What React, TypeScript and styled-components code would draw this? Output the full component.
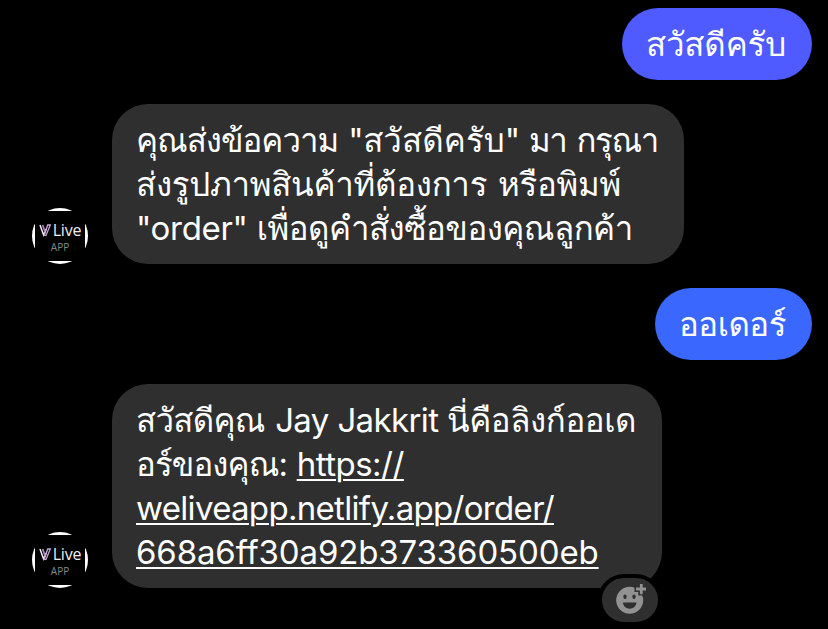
import React from "react";
import styled, { createGlobalStyle } from "styled-components";

const GlobalStyle = createGlobalStyle`
  * { box-sizing: border-box; }
  body { margin: 0; background: #000; overflow: hidden; }
`;

const Thread = styled.main`
  width: 828px;
  height: 629px;
  padding: 8px 16px 0 32px;
  display: flex;
  flex-direction: column;
  gap: 24px;
  background: #000;
  overflow: hidden;
  color: #fff;
  font: 400 33px/44px Inter, Loma, sans-serif;
`;

const Row = styled.div<{ $sent?: boolean }>`
  display: flex;
  flex: none;
  align-items: flex-end;
  justify-content: ${(p) => (p.$sent ? "flex-end" : "flex-start")};
  gap: 24px;
`;

const Bubble = styled.div<{ $color: string; $width: number }>`
  position: relative;
  width: ${(p) => p.$width}px;
  padding: 14px 24px;
  border-radius: 36px;
  background: ${(p) => p.$color};
`;

const Line = styled.div`
  height: 44px;
  white-space: pre;
`;

const Thai = styled.span<{ $track?: number }>`
  font-family: Loma, sans-serif;
  letter-spacing: ${(p) => p.$track ?? 0}px;
`;

const Latin = styled.span<{ $track?: number }>`
  letter-spacing: ${(p) => p.$track ?? 0}px;
`;

const Link = styled.a<{ $track?: number }>`
  color: inherit;
  letter-spacing: ${(p) => p.$track ?? 0}px;
  text-decoration: underline;
  text-decoration-thickness: 2px;
  text-underline-offset: 3px;
`;

const Avatar = styled.div`
  width: 56px;
  height: 56px;
  flex: none;
  border-radius: 50%;
  background: linear-gradient(#000, #000) center / 50px 50px no-repeat, #fff;
  padding-top: 13px;
  display: flex;
  flex-direction: column;
  align-items: center;
`;

const Brand = styled.div`
  display: flex;
  align-items: center;
  height: 18px;
  gap: 1px;
  font: 400 16px/18px "Open Sans", sans-serif;
  letter-spacing: -0.2px;
  color: #eee;
`;

const BrandSub = styled.div`
  margin-top: 1px;
  font: 400 10px/14px "Open Sans", sans-serif;
  color: #888;
`;

const Reaction = styled.button`
  position: absolute;
  right: 0;
  bottom: -38px;
  width: 64px;
  height: 52px;
  padding: 0;
  border: 4px solid #000;
  border-radius: 26px;
  background: #2f2f2f;
  display: flex;
  align-items: center;
  justify-content: center;
`;

const LiveAvatar = () => (
  <Avatar>
    <Brand>
      <svg width="13" height="14" viewBox="0 0 13 14" fill="none">
        <path d="M1 2 4.600 12 7.200 6" stroke="#eee" strokeWidth="1.5" />
        <path d="M3.600 2 6 8.500" stroke="#a77dbb" strokeWidth="1.800" />
        <path d="M5.200 12.400 8.700 2h2.600L7 12.400z" stroke="#c9a6d8" strokeWidth="1.300" />
      </svg>
      <span>Live</span>
    </Brand>
    <BrandSub>APP</BrandSub>
  </Avatar>
);

const SmileIcon = () => (
  <svg width="32" height="32" viewBox="0 0 32 32">
    <circle cx="15.700" cy="16.200" r="13.500" fill="#929292" />
    <path d="M20.500 5h13M27.300 0v11.500" stroke="#2f2f2f" strokeWidth="6" />
    <path d="M22 5h10M27.300 0v10.200" stroke="#929292" strokeWidth="2.800" />
    <ellipse cx="11" cy="12.800" rx="1.700" ry="2.300" fill="#2f2f2f" />
    <ellipse cx="20" cy="12.800" rx="1.700" ry="2.300" fill="#2f2f2f" />
    <path d="M8.900 18.600h13.600c-.6 4-3.200 6.200-6.800 6.200s-6.200-2.200-6.800-6.200z" fill="#2f2f2f" />
  </svg>
);

export default function App() {
  return (
    <>
      <GlobalStyle />
      <Thread>
        <Row $sent>
          <Bubble $color="#4f5bff" $width={190}>
            <Line><Thai $track={-0.15}>สวัสดีครับ</Thai></Line>
          </Bubble>
        </Row>
        <Row>
          <LiveAvatar />
          <Bubble $color="#2f2f2f" $width={572}>
            <Line><Thai $track={-1}>คุณส่งข้อความ </Thai><Latin $track={-0.6}>"</Latin><Thai $track={0.1}>สวัสดีครับ</Thai><Latin $track={-0.3}>" </Latin><Thai $track={-1.3}>มา กรุณา</Thai></Line>
            <Line><Thai $track={-0.25}>ส่งรูปภาพสินค้าที่ต้องการ หรือพิมพ์</Thai></Line>
            <Line><Latin $track={-0.3}>"order" </Latin><Thai $track={-0.52}>เพื่อดูคำสั่งซื้อของคุณลูกค้า</Thai></Line>
          </Bubble>
        </Row>
        <Row $sent>
          <Bubble $color="#3a68ff" $width={157}>
            <Line><Thai $track={-0.5}>ออเดอร์</Thai></Line>
          </Bubble>
        </Row>
        <Row>
          <LiveAvatar />
          <Bubble $color="#2f2f2f" $width={550}>
            <Line><Thai $track={-0.7}>สวัสดีคุณ </Thai><Latin $track={-0.62}>Jay Jakkrit </Latin><Thai $track={-0.4}>นี่คือลิงก์ออเด</Thai></Line>
            <Line><Thai $track={-0.9}>อร์ของคุณ</Thai><Latin $track={-0.3}>: </Latin><Link $track={-0.5}>https://</Link></Line>
            <Line><Link $track={-0.68}>weliveapp.netlify.app/order/</Link></Line>
            <Line><Link $track={-0.13}>668a6ff30a92b373360500eb</Link></Line>
            <Reaction aria-label="React"><SmileIcon /></Reaction>
          </Bubble>
        </Row>
      </Thread>
    </>
  );
}
